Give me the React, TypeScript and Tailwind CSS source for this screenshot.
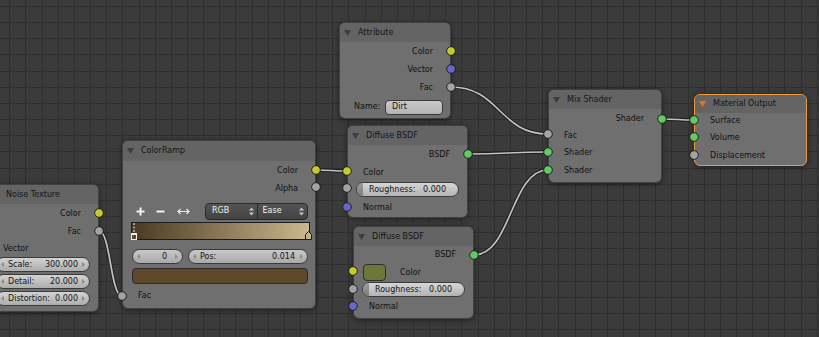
import type { ReactNode } from 'react';

type Sock = 'y' | 'b' | 'g' | 's';

const SOCK: Record<Sock, string> = {
  y: '#c9c92b',
  b: '#6666cc',
  g: '#a3a3a3',
  s: '#63c763',
};

const sockets: [number, number, Sock][] = [
  // noise texture
  [99, 213, 'y'],
  [99, 231, 'g'],
  // color ramp
  [316, 170, 'y'],
  [316, 187, 'g'],
  [122, 296, 'g'],
  // attribute
  [451, 51, 'y'],
  [451, 69, 'b'],
  [451, 87, 'g'],
  // diffuse 1
  [468, 154, 's'],
  [347, 171, 'y'],
  [347, 188, 'g'],
  [347, 207, 'b'],
  // diffuse 2
  [474, 255, 's'],
  [353, 271, 'y'],
  [353, 289, 'g'],
  [353, 306, 'b'],
  // mix shader
  [662, 119, 's'],
  [548, 134, 'g'],
  [548, 152, 's'],
  [548, 170, 's'],
  // material output
  [694, 120, 's'],
  [694, 137, 's'],
  [694, 155, 'g'],
];

const wires: [number, number, number, number][] = [
  [99, 231, 122, 296],
  [316, 170, 347, 171],
  [451, 87, 548, 134],
  [468, 154, 548, 152],
  [474, 255, 548, 170],
  [662, 119, 694, 120],
];

function wirePath([x1, y1, x2, y2]: [number, number, number, number]) {
  const d = Math.max(Math.abs(x2 - x1) * 0.5, 8);
  return `M${x1} ${y1} C${x1 + d} ${y1} ${x2 - d} ${y2} ${x2} ${y2}`;
}

const gridX = Array.from({ length: 52 }, (_, i) => Math.round(9.3 + 16.15 * i));
const gridY = Array.from({ length: 22 }, (_, i) => Math.round(6 + 16.15 * i));

function Tri({ color = '#3d3d3d' }: { color?: string }) {
  return (
    <svg width="7" height="6" viewBox="0 0 7 6" className="shrink-0">
      <path d="M0 0 L7 0 L3.5 6 Z" fill={color} />
    </svg>
  );
}

function Node({
  left,
  top,
  width,
  height,
  title,
  active,
  headH = 'h-[19px]',
  children,
}: {
  left: number;
  top: number;
  width: number;
  height: number;
  title: string;
  active?: boolean;
  headH?: string;
  children: ReactNode;
}) {
  return (
    <div
      className={`absolute flex flex-col rounded-[6px] border bg-[#737373]/[0.93] shadow-[0_1px_5px_rgba(0,0,0,0.5)] ${
        active ? 'border-[#ef9b36]' : 'border-[#2e2e2e]/70'
      }`}
      style={{ left, top, width, height }}
    >
      <div className={`flex ${headH} shrink-0 items-center gap-[7px] rounded-t-[5px] bg-[#646464] pl-[4px]`}>
        <Tri color={active ? '#e8731e' : '#3d3d3d'} />
        <span className="text-[#141414]">{title}</span>
      </div>
      {children}
    </div>
  );
}

function Out({ h, children }: { h: string; children: ReactNode }) {
  return <div className={`flex ${h} shrink-0 items-center justify-end pr-[17px]`}>{children}</div>;
}

function In({ h, children }: { h: string; children: ReactNode }) {
  return <div className={`flex ${h} shrink-0 items-center pl-[15px]`}>{children}</div>;
}

function ArrowL() {
  return (
    <svg width="3" height="5" viewBox="0 0 3 5" className="shrink-0">
      <path d="M3 0 L0 2.5 L3 5 Z" fill="#8a8a8a" />
    </svg>
  );
}

function ArrowR() {
  return (
    <svg width="3" height="5" viewBox="0 0 3 5" className="shrink-0">
      <path d="M0 0 L3 2.5 L0 5 Z" fill="#8a8a8a" />
    </svg>
  );
}

function NumField({ label, value }: { label: string; value: string }) {
  return (
    <div className="mx-[8px] flex h-[15px] flex-1 items-center rounded-full border border-[#3a3a3a] bg-gradient-to-b from-[#d3d3d3] to-[#adadad] px-[4px] text-[#151515]">
      <ArrowL />
      <span className="ml-[4px]">{label}</span>
      <span className="ml-auto mr-[4px]">{value}</span>
      <ArrowR />
    </div>
  );
}

function Slider({ label, value }: { label: string; value: string }) {
  return (
    <div className="relative mx-[8px] flex h-[15px] flex-1 items-center overflow-hidden rounded-full border border-[#3a3a3a] bg-gradient-to-b from-[#d6d6d6] to-[#b3b3b3] px-[12px] text-[#151515]">
      <div className="absolute left-0 top-0 h-full w-[6px] bg-gradient-to-b from-[#9c9c9c] to-[#7d7d7d]" />
      <span className="relative">{label}</span>
      <span className="relative ml-auto">{value}</span>
    </div>
  );
}

function UpDown() {
  return (
    <svg width="5" height="9" viewBox="0 0 5 9" className="shrink-0">
      <path d="M0 3.5 L2.5 0.5 L5 3.5 Z M0 5.5 L2.5 8.5 L5 5.5 Z" fill="#c8c8c8" />
    </svg>
  );
}

export default function App() {
  return (
    <div className="relative h-[337px] w-[819px] overflow-hidden bg-[#3b3b3b] font-['DejaVu_Sans',sans-serif] text-[8px] leading-none text-[#111]">
      {/* grid + wires */}
      <svg className="absolute inset-0" width="819" height="337">
        {gridX.map((x) => (
          <rect key={`x${x}`} x={x} y={0} width={1} height={337} fill="#2f2f2f" />
        ))}
        {gridY.map((y) => (
          <rect key={`y${y}`} x={0} y={y} width={819} height={1} fill="#2f2f2f" />
        ))}
        {wires.map((w, i) => (
          <g key={i}>
            <path d={wirePath(w)} stroke="#1f1f1f" strokeWidth={3.6} fill="none" />
            <path d={wirePath(w)} stroke="#c2c2c2" strokeWidth={1.7} fill="none" />
          </g>
        ))}
      </svg>

      {/* Noise Texture */}
      <Node left={-13} top={184} width={112} height={128} title="Noise Texture">
        <div className="h-[1px] shrink-0" />
        <Out h="h-[18px]">Color</Out>
        <Out h="h-[18px]">Fac</Out>
        <In h="h-[15px]">Vector</In>
        <div className="flex h-[17px] items-center">
          <NumField label="Scale:" value="300.000" />
        </div>
        <div className="flex h-[17px] items-center">
          <NumField label="Detail:" value="20.000" />
        </div>
        <div className="flex h-[17px] items-center">
          <NumField label="Distortion:" value="0.000" />
        </div>
      </Node>

      {/* ColorRamp */}
      <Node left={122} top={140} width={194} height={169} title="ColorRamp" headH="h-[20px]">
        <div className="h-[1px] shrink-0" />
        <Out h="h-[18px]">Color</Out>
        <Out h="h-[17px]">Alpha</Out>
        <div className="h-[5px] shrink-0" />
        <div className="flex h-[18px] shrink-0 items-center pl-[13px] pr-[7px]">
          <svg width="9" height="9" viewBox="0 0 9 9" className="shrink-0">
            <path d="M4.5 0.5 V8.5 M0.5 4.5 H8.5" stroke="#f2f2f2" strokeWidth="2" />
          </svg>
          <svg width="9" height="9" viewBox="0 0 9 9" className="ml-[11px] shrink-0">
            <path d="M0.5 4.5 H8.5" stroke="#f2f2f2" strokeWidth="2" />
          </svg>
          <svg width="13" height="9" viewBox="0 0 13 9" className="ml-[12px] shrink-0">
            <path d="M1 4.5 H12 M3.5 2 L1 4.5 L3.5 7 M9.5 2 L12 4.5 L9.5 7" stroke="#ededed" strokeWidth="1.2" fill="none" />
          </svg>
          <div className="ml-auto flex h-[17px] w-[103px] overflow-hidden rounded-[4px] border border-[#2a2a2a] bg-gradient-to-b from-[#545454] to-[#434343] text-[#f2f2f2]">
            <div className="flex flex-1 items-center border-r border-[#2a2a2a] pl-[6px] pr-[3px]">
              <span>RGB</span>
              <span className="ml-auto">
                <UpDown />
              </span>
            </div>
            <div className="flex flex-1 items-center pl-[5px] pr-[3px]">
              <span>Ease</span>
              <span className="ml-auto">
                <UpDown />
              </span>
            </div>
          </div>
        </div>
        <div className="mt-[2px] flex shrink-0 pl-[8px] pr-[5px]">
          <div className="relative h-[18px] flex-1 border border-[#1c1c1c] bg-gradient-to-r from-[#4a3a24] via-[#8c7858] to-[#cbb88e]">
            <svg className="absolute left-[-2px] top-[-1px] overflow-visible" width="181" height="19">
              <path d="M4 1 V11" stroke="#f5f5f5" strokeWidth="1" strokeDasharray="2 1.5" />
              <rect x="1.5" y="11.5" width="5" height="6" fill="#5a4830" stroke="#f0f0f0" strokeWidth="1" />
              <rect x="1.5" y="11.5" width="5" height="1.5" fill="#f0f0f0" />
              <path d="M175.5 17.5 V12.5 L178.5 9.5 L181.5 12.5 V17.5 Z" fill="#c7b38b" stroke="#1a1a1a" strokeWidth="1" />
            </svg>
          </div>
        </div>
        <div className="mt-[9px] flex h-[15px] shrink-0 gap-[5px] pl-[9px] pr-[7px]">
          <div className="flex w-[51px] items-center rounded-full border border-[#3a3a3a] bg-gradient-to-b from-[#c8c8c8] to-[#a9a9a9] px-[4px] text-[#151515]">
            <ArrowL />
            <span className="ml-auto mr-[8px]">0</span>
            <ArrowR />
          </div>
          <div className="flex flex-1 items-center rounded-full border border-[#3a3a3a] bg-gradient-to-b from-[#c8c8c8] to-[#a9a9a9] px-[4px] text-[#151515]">
            <ArrowL />
            <span className="ml-[4px]">Pos:</span>
            <span className="ml-auto mr-[5px]">0.014</span>
            <ArrowR />
          </div>
        </div>
        <div className="mt-[4px] flex shrink-0 pl-[9px] pr-[7px]">
          <div className="h-[16px] flex-1 rounded-[4px] border border-[#2b2b2b] bg-[#5d4929]" />
        </div>
        <div className="h-[4px] shrink-0" />
        <In h="h-[16px]">Fac</In>
      </Node>

      {/* Attribute */}
      <Node left={339} top={22} width={112} height={97} title="Attribute">
        <div className="h-[1px] shrink-0" />
        <Out h="h-[18px]">Color</Out>
        <Out h="h-[18px]">Vector</Out>
        <Out h="h-[18px]">Fac</Out>
        <div className="flex h-[20px] shrink-0 items-center pl-[14px] pr-[7px]">
          <span>Name:</span>
          <div className="ml-auto flex h-[15px] w-[58px] items-center rounded-[4px] border border-[#3a3a3a] bg-gradient-to-b from-[#c9c9c9] to-[#b3b3b3] pl-[6px] text-[#151515]">
            Dirt
          </div>
        </div>
      </Node>

      {/* Diffuse BSDF 1 */}
      <Node left={347} top={125} width={121} height={93} title="Diffuse BSDF">
        <div className="h-[1px] shrink-0" />
        <Out h="h-[18px]">BSDF</Out>
        <In h="h-[17px]">Color</In>
        <div className="flex h-[17px] shrink-0 items-center">
          <Slider label="Roughness:" value="0.000" />
        </div>
        <In h="h-[19px]">Normal</In>
      </Node>

      {/* Diffuse BSDF 2 */}
      <Node left={353} top={226} width={121} height={93} title="Diffuse BSDF">
        <Out h="h-[18px]">BSDF</Out>
        <div className="flex h-[17px] shrink-0 items-center pl-[9px]">
          <div className="h-[17px] w-[23px] rounded-[4px] border border-[#2e2e2e] bg-[#6c773a]" />
          <span className="ml-[14px]">Color</span>
        </div>
        <div className="flex h-[17px] shrink-0 items-center">
          <Slider label="Roughness:" value="0.000" />
        </div>
        <In h="h-[18px]">Normal</In>
      </Node>

      {/* Mix Shader */}
      <Node left={548} top={89} width={114} height={94} title="Mix Shader">
        <div className="h-[1px] shrink-0" />
        <Out h="h-[17px]">Shader</Out>
        <In h="h-[17px]">Fac</In>
        <In h="h-[18px]">Shader</In>
        <In h="h-[18px]">Shader</In>
      </Node>

      {/* Material Output */}
      <Node left={694} top={94} width={113} height={72} title="Material Output" active headH="h-[18px]">
        <In h="h-[16px]">Surface</In>
        <In h="h-[18px]">Volume</In>
        <In h="h-[18px]">Displacement</In>
      </Node>

      {/* sockets */}
      <svg className="pointer-events-none absolute inset-0" width="819" height="337">
        {sockets.map(([x, y, c], i) => (
          <circle key={i} cx={x} cy={y} r={4.3} fill={SOCK[c]} stroke="#161616" strokeWidth={0.9} />
        ))}
      </svg>
    </div>
  );
}
